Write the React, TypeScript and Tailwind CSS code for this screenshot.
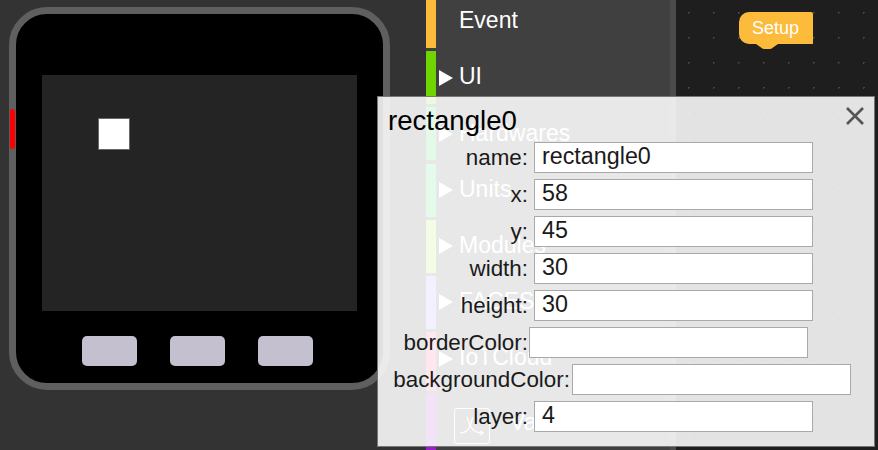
import React from 'react';

const font = { fontFamily: '"Liberation Sans", Arial, sans-serif' };

const blocks = [
  { label: 'Event', color: 'bg-[#fdbb3c]', arrow: false, row: 'h-[53px]', inner: '' },
  { label: 'UI', color: 'bg-[#6fd400]', arrow: true, row: 'h-[53px]', inner: '' },
  { label: 'Hardwares', color: 'bg-[#22d04a]', arrow: true, row: 'h-[53px]', inner: '' },
  { label: 'Units', color: 'bg-[#22d05a]', arrow: true, row: 'h-[53px]', inner: '' },
  { label: 'Modules', color: 'bg-[#a6e02a]', arrow: true, row: 'h-[53px]', inner: '' },
  { label: 'FACES', color: 'bg-[#9a86ff]', arrow: true, row: 'h-[53px]', inner: '' },
  { label: 'IoTCloud', color: 'bg-[#ff3b6b]', arrow: true, row: 'h-[59px]', inner: 'pb-[6px]' },
];

const fields = [
  { name: 'name', value: 'rectangle0', label: 'w-[150px]', input: 'ml-[6px]' },
  { name: 'x', value: '58', label: 'w-[150px]', input: 'ml-[6px]' },
  { name: 'y', value: '45', label: 'w-[150px]', input: 'ml-[6px]' },
  { name: 'width', value: '30', label: 'w-[150px]', input: 'ml-[6px]' },
  { name: 'height', value: '30', label: 'w-[150px]', input: 'ml-[6px]' },
  { name: 'borderColor', value: '', label: 'w-[150px]', input: 'ml-[1px]' },
  { name: 'backgroundColor', value: '', label: 'w-[192px]', input: 'ml-[2px]' },
  { name: 'layer', value: '4', label: 'w-[150px]', input: 'ml-[6px]' },
];

function Device() {
  return (
    <div className="relative flex h-[383px] w-[381px] flex-col items-center rounded-[38px] border-[7px] border-[#5f5f5f] bg-black">
      <div className="absolute -left-[6px] top-[95px] h-[40px] w-[5px] rounded-sm bg-[#ff0000]" />
      <div className="mt-[61px] h-[236px] w-[315px] bg-[#242424] pl-[56px] pt-[43px]">
        <div className="h-[32px] w-[32px] border border-[#666] bg-white" />
      </div>
      <div className="mr-[4px] mt-[25px] flex gap-[33px]">
        <div className="h-[30px] w-[55px] rounded-[5px] bg-[#c4c0cf]" />
        <div className="h-[30px] w-[55px] rounded-[5px] bg-[#c4c0cf]" />
        <div className="h-[30px] w-[55px] rounded-[5px] bg-[#c4c0cf]" />
      </div>
    </div>
  );
}

function Palette() {
  return (
    <div className="flex h-full w-[250px] bg-[#404040]">
      <div className="-mt-[5px] flex w-[244px] flex-col gap-[3.2px]">
        {blocks.map((b) => (
          <div key={b.label} className={`flex shrink-0 ${b.row}`}>
            <div className={`h-full w-[10px] ${b.color}`} />
            <div className={`flex items-center ${b.inner}`}>
              <div className="flex w-[23px] justify-end pr-[6px]">
                {b.arrow && <div className="h-0 w-0 border-y-[8px] border-l-[14px] border-y-transparent border-l-white" />}
              </div>
              <span className="-mt-[2px] text-[23px] text-white">{b.label}</span>
            </div>
          </div>
        ))}
        <div className="flex h-[64px] shrink-0">
          <div className="h-full w-[10px] bg-[#9c1ccf]" />
          <div className="ml-[18px] mt-[14px] flex h-[36px] w-[36px] items-center justify-center rounded-[3px] border border-white">
            <svg width="26" height="20" viewBox="0 0 26 20" fill="none" stroke="white" strokeWidth="1.2">
              <path d="M1 17c5 0 8-2 10-7s2-7 3-9" />
              <path d="M8 1c1 3 2 6 4 10s5 6 12 6" />
              <path d="M21 15l3 2-3 2" />
            </svg>
          </div>
          <span className="ml-[20px] mt-[11px] text-[23px] text-white">Variables</span>
        </div>
      </div>
      <div className="h-full w-[6px] bg-[#4b4b4b]" />
    </div>
  );
}

function Workspace() {
  return (
    <div className="h-full flex-1 bg-[#1e1e1e] bg-[radial-gradient(#454545_1px,transparent_1px)] bg-[length:25px_25px] pl-[63px] pt-[12px]">
      <div className="relative flex h-[32px] w-[74px] items-center justify-center rounded-l-[10px] rounded-tr-[2px] bg-[#fdbb3c] pr-[1px] pt-[1px] text-[18px] text-white">
        Setup
        <svg className="absolute left-[17px] top-[32px]" width="22" height="5" viewBox="0 0 22 5">
          <path d="M0 0h22l-5 3.5q-1 1-3 1.5h-6q-2-.5-3-1.5z" fill="#fdbb3c" />
        </svg>
      </div>
    </div>
  );
}

function Dialog() {
  return (
    <div className="absolute left-[377px] top-[96px] h-[351px] w-[498px] border border-[#777] bg-[rgba(255,255,255,0.88)]">
      <div className="pl-[10px] pt-[8px] text-[27.6px] leading-[32px] text-black">rectangle0</div>
      <button className="absolute right-[9px] top-[9px] text-[#555]">
        <svg width="20" height="20" viewBox="0 0 20 20" stroke="currentColor" strokeWidth="2.6">
          <path d="M2 2l16 16M18 2L2 18" />
        </svg>
      </button>
      <div className="mt-[5px] flex flex-col gap-[6px]">
        {fields.map((f) => (
          <div key={f.name} className="flex h-[31px] items-center">
            <label className={`whitespace-nowrap text-right text-[22.4px] leading-[31px] text-[#1a1a1a] ${f.label}`}>
              {f.name}:
            </label>
            <input
              readOnly
              value={f.value}
              className={`h-[31px] w-[279px] border border-[#a9a9a9] bg-white pb-[2px] pl-[7px] pr-[6px] text-[23.3px] text-[#1a1a1a] outline-none ${f.input}`}
            />
          </div>
        ))}
      </div>
    </div>
  );
}

export default function App() {
  return (
    <div style={font} className="relative flex h-[450px] w-[878px] overflow-hidden bg-[#333333]">
      <div className="w-[426px] shrink-0 pl-[9px] pt-[7px]">
        <Device />
      </div>
      <Palette />
      <Workspace />
      <Dialog />
    </div>
  );
}
